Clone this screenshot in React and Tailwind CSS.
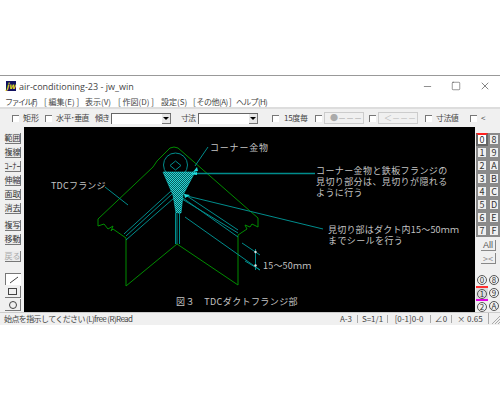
import { Minus, Square, X } from 'lucide-react';

const jp = { fontFamily: '"Noto Sans CJK JP", sans-serif' };

const menus = [
    ['ファイル(F)', 'w-[39px] tracking-[-1.5px]'],
    ['[ 編集(E) ]', 'w-[41px]'],
    ['表示(V)', 'w-[33px]'],
    ['[ 作図(D) ]', 'w-[43px]'],
    ['設定(S)', 'w-[32px]'],
    ['[ その他(A) ]', 'w-[43px] tracking-[-0.5px]'],
    ['ヘルプ(H)', 'w-[30px] tracking-[-0.7px]'],
];

const leftButtons = [
    ['範囲', 'mt-[6px]', 'text-[#333]'],
    ['複線', 'mt-[3px]', 'text-[#333]'],
    ['ｺｰﾅｰ', 'mt-[3px]', 'text-[#333]'],
    ['伸縮', 'mt-[3px]', 'text-[#333]'],
    ['面取', 'mt-[3px]', 'text-[#333]'],
    ['消去', 'mt-[3px]', 'text-[#333]'],
    ['複写', 'mt-[6px]', 'text-[#333]'],
    ['移動', 'mt-[3px]', 'text-[#333]'],
    ['戻る', 'mt-[6px]', 'text-[#aaa]'],
];

const layers = [
    ['0', '8'], ['1', '9'], ['2', 'A'], ['3', 'B'],
    ['4', 'C'], ['5', 'D'], ['6', 'E'], ['7', 'F'],
];

function Check({ className = '' }) {
    return <span className={`w-[7px] h-[7px] shrink-0 border-t border-l border-[#777] bg-white ${className}`}></span>;
}

function Select({ className = '' }) {
    return (
        <span className={`w-[60px] h-[11px] shrink-0 bg-white border-t border-l border-[#666] flex justify-end ${className}`}>
            <span className="w-[9px] h-[10px] bg-[#e8e8e8] border-r border-b border-[#777] flex items-center justify-center">
                <span className="border-x-[3px] border-t-[3px] border-x-transparent border-t-black"></span>
            </span>
        </span>
    );
}

function LayerCell({ label, active }) {
    return (
        <div className={`w-[12px] h-[13px] border-2 flex items-center justify-center text-[9px] leading-none text-[#333] ${active ? 'border-[#666] border-t-[#ff2020] bg-white' : 'border-[#8a8a8a] bg-[#efefef]'}`}>
            {label}
        </div>
    );
}

function GroupCell({ label, line }) {
    return (
        <div className={`w-[12px] h-[13px] flex items-center justify-center ${line}`}>
            <span className="w-[10px] h-[10px] rounded-full border border-[#555] flex items-center justify-center text-[8px] leading-none text-[#333]">{label}</span>
        </div>
    );
}

function Drawing() {
    const green = '#008c00';
    const teal = '#008c8c';
    return (
        <svg viewBox="24 127 451 185" width="451" height="185" className="block">
            <defs>
                <pattern id="mesh" width="2" height="2" patternUnits="userSpaceOnUse">
                    <rect width="2" height="2" fill="#0a5a5a" />
                    <rect width="1" height="1" fill="#28d8d8" />
                    <rect x="1" y="1" width="1" height="1" fill="#28d8d8" />
                </pattern>
            </defs>
            <g fill="none" stroke={green} strokeWidth="1">
                <path d="M98 219 L153 167 L157 161 L170 148 Q174 146 178 148 L258 218 L258 227 L252 224 L250 227 L245 225 L247 229 L238 235 L238 285 L177 244 L126 286 L126 238 L113 229 L111 231 L113 226 L108 229 L104 224 L98 226 Z" />
            </g>
            <g fill="none" stroke={teal} strokeWidth="1">
                <circle cx="175.5" cy="165" r="12" />
                <path d="M175.5 161 L181 165.5 L175.5 170 L170 165.5 Z" />
                <path d="M126 236 L172 194 M126 240 L174 198 M124 234 L171 191" />
                <path d="M180 196 L238 237 M182 199 L238 233 M184 194 L238 230" />
                <path d="M175.5 213 L175.5 244 M179.5 213 L179.5 244 M177 214 L177 244" />
                <path d="M185 217 L260 270" />
                <path d="M242 243 L260 255 M245 261 L260 270 M255.5 249 L255.5 270" />
                <path d="M208 147 L195 166" />
                <path d="M105 187 L128 205" />
                <path d="M194 173.5 L315 173.5" strokeWidth="1.5" />
                <path d="M185 195.5 L323 229" />
            </g>
            <path d="M163 172 L195 172 L183 195 L181 213 L176 213 L173 195 Z" fill="url(#mesh)" stroke="#18c8c8" strokeWidth="0.6" />
            <path d="M197 167 L193 172 L198 171 Z M190 174 L197 172 L197 175 Z M184 194 L190 195 L185 198 Z" fill="#20dcdc" />
            <circle cx="255.5" cy="252" r="1.2" fill="#e0e0e0" />
            <circle cx="255.5" cy="265.5" r="1.2" fill="#e0e0e0" />
            <g fill="#c4c4c4" fontSize="9" style={jp}>
                <text x="51" y="189" letterSpacing="0.2">TDCフランジ</text>
                <text x="210" y="150.5" letterSpacing="0.8">コーナー金物</text>
                <text x="316" y="173.5" letterSpacing="0.4">コーナー金物と鉄板フランジの</text>
                <text x="316" y="184.5" letterSpacing="0.4">見切り部分は、見切りが隠れる</text>
                <text x="316" y="195.5" letterSpacing="0.4">ように行う</text>
                <text x="328" y="232.5" letterSpacing="0.2">見切り部はダクト内15～50ｍｍ</text>
                <text x="328" y="243.5" letterSpacing="0.4">までシールを行う</text>
                <text x="263" y="268.5" letterSpacing="0.2">15～50ｍｍ</text>
                <text x="176" y="304.5" letterSpacing="0.4">図３　TDCダクトフランジ部</text>
            </g>
        </svg>
    );
}

export default function App() {
    return (
        <div className="w-[500px] h-[400px] bg-white pt-[75px] overflow-hidden" style={jp}>
            <div className="h-[250px] border-t border-[#999] flex flex-col bg-[#f0f0f0]">
                <div className="h-[20px] bg-white flex items-center shrink-0">
                    <div className="ml-[6px] w-[10px] h-[10px] bg-[#101060] flex items-center justify-center text-[8px] leading-none italic font-bold text-[#f4e020]">jw</div>
                    <span className="ml-[3px] text-[9px] leading-none text-[#444]" style={{ fontFamily: '"Open Sans", sans-serif' }}>air-conditioning-23 - jw_win</span>
                    <Minus size={11} strokeWidth={1.2} className="ml-auto text-[#333]" />
                    <Square size={10} strokeWidth={1.2} className="ml-[18px] text-[#333]" />
                    <X size={12} strokeWidth={1.2} className="ml-[18px] mr-[9px] text-[#333]" />
                </div>
                <div className="h-[11px] bg-white flex items-center pl-[5px] text-[8px] leading-none text-[#444] shrink-0 whitespace-nowrap">
                    {menus.map(([label, width]) => (
                        <span key={label} className={width}>{label}</span>
                    ))}
                </div>
                <div className="h-[20px] border-t-2 border-[#ddd] flex items-center text-[8px] leading-none text-[#444] shrink-0 whitespace-nowrap">
                    <Check className="ml-[12px]" />
                    <span className="ml-[4px] w-[15px]">矩形</span>
                    <Check className="ml-[7px]" />
                    <span className="ml-[4px] w-[33px] tracking-[-0.6px]">水平･垂直</span>
                    <span className="ml-[6px] w-[13px] tracking-[-1px]">傾き</span>
                    <Select className="ml-[3px]" />
                    <span className="ml-[10px] w-[14px] tracking-[-1px]">寸法</span>
                    <Select className="ml-[3px]" />
                    <Check className="ml-[14px]" />
                    <span className="ml-[5px] w-[24px] tracking-[-0.3px]">15度毎</span>
                    <Check className="ml-[7px]" />
                    <span className="ml-[2px] w-[40px] h-[12px] shrink-0 border border-[#ccc] text-[#aaa] flex items-center pl-[5px]">●－－－</span>
                    <Check className="ml-[5px]" />
                    <span className="ml-[2px] w-[40px] h-[12px] shrink-0 border border-[#ccc] text-[#bbb] flex items-center pl-[5px]">＜－－－</span>
                    <Check className="ml-[7px]" />
                    <span className="ml-[4px] w-[22px] tracking-[-0.6px]">寸法値</span>
                    <Check className="ml-[12px]" />
                    <span className="ml-[4px]">&lt;</span>
                </div>
                <div className="h-[185px] flex shrink-0">
                    <div className="w-[24px] shrink-0 flex flex-col pl-[5px] overflow-hidden">
                        {leftButtons.map(([label, gap, color]) => (
                            <div key={label} className={`w-[16px] h-[11px] shrink-0 border-r border-b border-[#777] bg-[#ececec] flex items-center justify-center text-[8px] leading-none whitespace-nowrap ${gap} ${color}`}>{label}</div>
                        ))}
                        <div className="w-[16px] h-[12px] shrink-0 mt-[11px] border-t border-l border-[#777] bg-white flex items-center justify-center">
                            <svg width="10" height="8" viewBox="0 0 10 8"><path d="M1 7 L9 1" stroke="#444" fill="none" /></svg>
                        </div>
                        <div className="w-[16px] h-[12px] shrink-0 mt-[1px] border-r border-b border-[#777] flex items-center justify-center">
                            <span className="w-[9px] h-[7px] border border-[#444]"></span>
                        </div>
                        <div className="w-[16px] h-[12px] shrink-0 mt-[1px] border-r border-b border-[#777] flex items-center justify-center">
                            <span className="w-[8px] h-[8px] rounded-full border border-[#444]"></span>
                        </div>
                    </div>
                    <div className="w-[451px] bg-black shrink-0">
                        <Drawing />
                    </div>
                    <div className="w-[25px] shrink-0 flex flex-col overflow-hidden pl-[1px]">
                        <div className="grid grid-cols-2 mt-[6px]">
                            {layers.map(([a, b], i) => [
                                <LayerCell key={a} label={a} active={i === 0} />,
                                <LayerCell key={b} label={b} />,
                            ])}
                        </div>
                        <div className="w-[15px] h-[11px] mt-[3px] ml-[5px] border-r border-b border-[#888] flex items-center justify-center text-[9px] leading-none text-[#555]" style={{ fontFamily: '"Liberation Sans", sans-serif' }}>All</div>
                        <div className="w-[15px] h-[11px] mt-[2px] ml-[5px] border-r border-b border-[#888] flex items-center justify-center text-[9px] leading-none text-[#888]">&gt;&lt;</div>
                        <div className="grid grid-cols-2 mt-[9px]">
                            <GroupCell label="0" line="bg-[#f0f0f0]" />
                            <GroupCell label="8" line="bg-[#f0f0f0]" />
                            <GroupCell label="1" line="bg-[#dcdcdc] border-t-2 border-[#ff3030]" />
                            <GroupCell label="9" line="bg-[#f0f0f0]" />
                            <GroupCell label="2" line="bg-[#f0f0f0] border-t-2 border-[#e000e0]" />
                            <GroupCell label="A" line="bg-[#f0f0f0]" />
                        </div>
                    </div>
                </div>
                <div className="h-[12px] border-t border-[#ccc] flex items-center text-[8px] leading-none text-[#444] shrink-0 whitespace-nowrap">
                    <span className="ml-[4px] tracking-[-0.6px]">始点を指示してください (L)free (R)Read</span>
                    <span className="ml-auto w-[22px] text-center">A-3</span>
                    <span className="w-[30px] border-l border-[#aaa] text-center">S=1/1</span>
                    <span className="w-[43px] border-l border-[#aaa] text-center">[0-1]0-0</span>
                    <span className="w-[21px] border-l border-[#aaa] text-center">∠0</span>
                    <span className="w-[37px] border-l border-[#aaa] text-center">× 0.65</span>
                    <span className="w-[12px] h-[11px] border-l border-[#aaa] flex items-end justify-end">
                        <svg width="9" height="9" viewBox="0 0 9 9"><path d="M9 1 L1 9 M9 4 L4 9 M9 7 L7 9" stroke="#aaa" fill="none" /></svg>
                    </span>
                </div>
            </div>
        </div>
    );
}
